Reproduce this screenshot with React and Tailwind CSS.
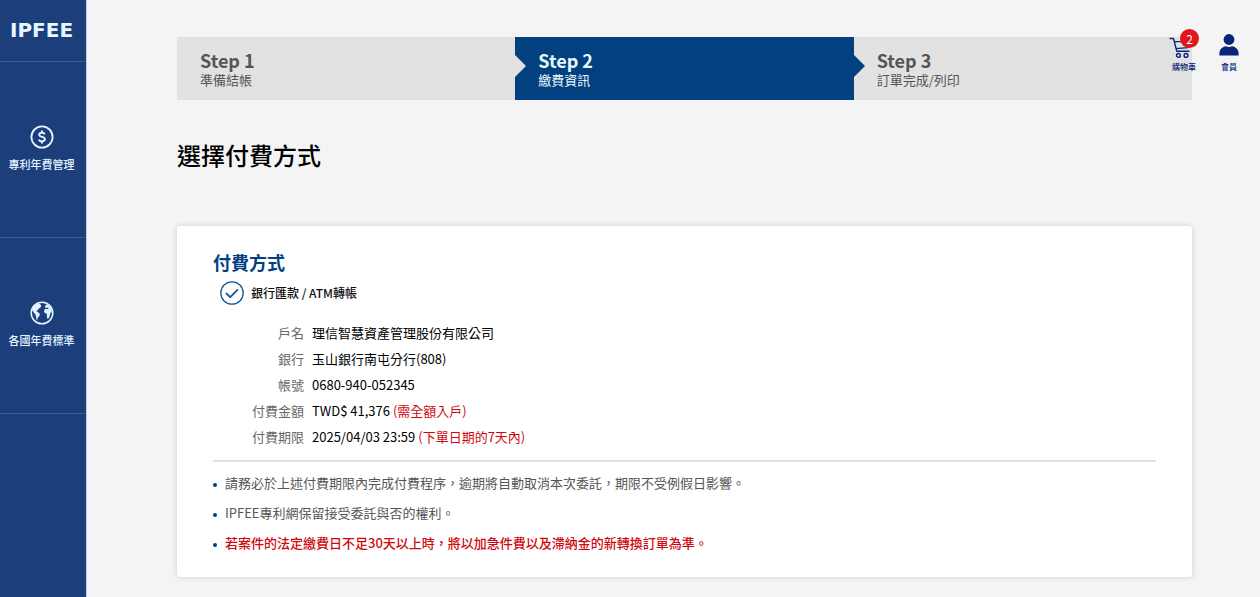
import React from 'react';

const menuItems = [
  { label: '專利年費管理', icon: 'dollar' },
  { label: '各國年費標準', icon: 'globe' },
];

const steps = [
  { title: 'Step 1', text: '準備結帳' },
  { title: 'Step 2', text: '繳費資訊', active: true },
  { title: 'Step 3', text: '訂單完成/列印' },
];

const accountRows = [
  { label: '戶名', value: '理信智慧資產管理股份有限公司' },
  { label: '銀行', value: '玉山銀行南屯分行(808)' },
  { label: '帳號', value: '0680-940-052345' },
  { label: '付費金額', value: 'TWD$ 41,376', hint: '(需全額入戶)' },
  { label: '付費期限', value: '2025/04/03 23:59', hint: '(下單日期的7天內)' },
];

const notes = [
  { text: '請務必於上述付費期限內完成付費程序，逾期將自動取消本次委託，期限不受例假日影響。' },
  { text: 'IPFEE專利網保留接受委託與否的權利。' },
  { text: '若案件的法定繳費日不足30天以上時，將以加急件費以及滯納金的新轉換訂單為準。', warning: true },
];

const DollarIcon = () => (
  <svg className="w-6 h-6" viewBox="0 0 24 24" fill="none" stroke="currentColor" aria-hidden="true">
    <circle cx="12" cy="12" r="10.6" strokeWidth="1.8" />
    <path
      d="M14.7 9.4C14.3 8.3 13.4 7.7 12 7.7c-1.7 0-2.8.8-2.8 2 0 2.9 5.7 1.5 5.7 4.4 0 1.3-1.2 2.2-2.9 2.2-1.6 0-2.7-.7-3-1.9M12 5.6v2.1M12 16.3v2.1"
      strokeWidth="1.9"
    />
  </svg>
);

const GlobeIcon = () => (
  <svg className="w-6 h-6" viewBox="0 0 24 24" fill="none" aria-hidden="true">
    <circle cx="12" cy="12" r="10.8" stroke="currentColor" strokeWidth="1.5" />
    {/* Americas */}
    <path
      d="M3 6.6C4.2 4.6 6 3 8.8 2.2l1.6 1.4.8 1.2-.6 1.6-1.8 1-1 1.8-1.4.2.4 1.2 1.6.8 1.6 1.6-.8 2.2-1.4 1.4-.4 2.2-.8.2-.6-3.2-.4-2.4-1.6-1.4L2.4 9z"
      fill="currentColor"
    />
    {/* Europe and Africa */}
    <path
      d="M14.8 5.2l1.8-1.8 2.6 1.4 2 3 .8 3.6-1.4.2-.6 2-.4 2.2-1.4 2-1-.4-.4-2.6.2-2-2-.6-1-1.8.6-2 1.4-1z"
      fill="currentColor"
    />
    <path d="M15.2 7.4l2-.8 1.8.8-2 .8z" fill="#1c3f7c" />
  </svg>
);

const CartIcon = () => (
  <svg className="w-[22px] h-[22px]" viewBox="0 0 22 22" fill="none" stroke="currentColor" strokeWidth="1.4" aria-hidden="true">
    <path d="M0.5 1.5h4l3.3 12.8h12.7" strokeLinejoin="round" />
    <path d="M5.2 4.6h16l-2.2 6L6.9 11.6" strokeLinejoin="round" />
    <circle cx="9.4" cy="18.4" r="1.9" />
    <circle cx="17" cy="18.4" r="1.9" />
  </svg>
);

const MemberIcon = () => (
  <svg className="w-5 h-[22px]" viewBox="0 0 20 22" fill="currentColor" aria-hidden="true">
    <circle cx="10" cy="5.5" r="5.4" />
    <path d="M0.4 21.6v-2.4c0-3.8 3-6.4 6.6-7 .9.5 1.9.8 3 .8s2.1-.3 3-.8c3.6.6 6.6 3.2 6.6 7v2.4z" />
  </svg>
);

const Sidebar = () => (
  <aside className="w-[87px] shrink-0 bg-[#1c3f7c] border-r border-[#b9d3ee] text-[#e3f3ff]">
    <a
      href="#home"
      className="flex h-[62px] items-center justify-center border-b border-[#3c5c94] pr-[3px] pb-[2px] font-['DejaVu_Sans',sans-serif] text-[20px] leading-none font-bold text-[#e6f7ff]"
    >
      IPFEE
    </a>
    <nav>
      {menuItems.map((item) => (
        <a
          key={item.label}
          href={`#${item.icon}`}
          className="flex h-44 flex-col items-center justify-center gap-[7px] border-b border-[#3c5c94] pr-[3px] pb-[3px]"
        >
          {item.icon === 'dollar' ? <DollarIcon /> : <GlobeIcon />}
          <span className="text-[11px] leading-4 font-medium whitespace-nowrap">{item.label}</span>
        </a>
      ))}
    </nav>
  </aside>
);

const UserLinks = () => (
  <div className="absolute top-[34px] right-[21px] flex gap-5 text-[#08247b]">
    <a href="#cart" className="relative flex flex-col items-center pt-[3px]">
      <span className="mr-2">
        <CartIcon />
      </span>
      <span className="absolute -top-[5px] right-0 flex h-[19px] w-[19px] items-center justify-center rounded-full bg-[#e0161b] text-[12px] leading-none text-white">
        2
      </span>
      <span className="mt-[2px] text-[8px] leading-3 font-medium">購物車</span>
    </a>
    <a href="#member" className="flex flex-col items-center">
      <MemberIcon />
      <span className="mt-[5px] text-[8px] leading-3 font-medium">會員</span>
    </a>
  </div>
);

const StepBar = () => (
  <ol className="grid grid-cols-3">
    {steps.map((step, index) => (
      <li
        key={step.title}
        className={`relative px-[23px] py-3 ${step.active ? 'bg-[#03407f] text-[#e8f8ff]' : 'bg-[#e2e2e2] text-[#555]'}`}
      >
        <div className="text-[18px] leading-[23px] font-bold">{step.title}</div>
        <div className="text-[13px] leading-4">{step.text}</div>
        {index < steps.length - 1 && (
          <span
            className={`absolute top-[18px] left-full z-10 border-y-[11px] border-l-[11px] border-y-transparent ${
              step.active ? 'border-l-[#03407f]' : 'border-l-[#e2e2e2]'
            }`}
          />
        )}
      </li>
    ))}
  </ol>
);

const PaymentCard = () => (
  <section className="mt-[53px] rounded-[3px] bg-white px-9 pt-[22px] pb-[19px] shadow-[0_0_6px_rgba(0,0,0,0.15)]">
    <h2 className="text-[18px] leading-7 font-bold text-[#03407f]">付費方式</h2>

    <label className="mt-[5px] ml-[7px] flex w-fit items-center gap-[7px] text-[12px] leading-6 font-medium text-[#111]">
      <input type="radio" name="payment" defaultChecked className="peer sr-only" />
      <svg className="w-6 h-6 text-[#175b96]" viewBox="0 0 24 24" fill="none" stroke="currentColor" aria-hidden="true">
        <circle cx="12" cy="12" r="11.2" strokeWidth="1.3" />
        <path d="M6 12l4.2 4.2L18 8.4" strokeWidth="1.8" />
      </svg>
      <span>銀行匯款 / ATM轉帳</span>
    </label>

    <dl className="mt-[15px] text-[13px] leading-[26px]">
      {accountRows.map((row) => (
        <div key={row.label} className="flex gap-2">
          <dt className="w-[91px] shrink-0 text-right text-[#666]">{row.label}</dt>
          <dd className="text-black">
            {row.value}
            {row.hint && <span className="text-[#d0090f]"> {row.hint}</span>}
          </dd>
        </div>
      ))}
    </dl>

    <ul className="mt-[10px] border-t-2 border-[#e2e2e2] pt-[6px] text-[13px] leading-[30px]">
      {notes.map((note) => (
        <li key={note.text} className="flex items-center gap-2">
          <span className="mt-1 h-1 w-1 shrink-0 rounded-full bg-[#03407f]" />
          <span className={note.warning ? 'font-medium text-[#d0090f]' : 'text-[#555]'}>{note.text}</span>
        </li>
      ))}
    </ul>
  </section>
);

const App = () => (
  <div
    lang="zh-Hant"
    className="relative flex min-h-screen bg-[#f4f4f4] font-['Noto_Sans_CJK_TC',sans-serif]"
  >
    <Sidebar />
    <main className="min-w-0 flex-1 pt-[37px] pr-[68px] pb-5 pl-[90px]">
      <StepBar />
      <h1 className="mt-[37px] text-[24px] leading-9 font-medium text-black">選擇付費方式</h1>
      <PaymentCard />
    </main>
    <UserLinks />
  </div>
);

export default App;
